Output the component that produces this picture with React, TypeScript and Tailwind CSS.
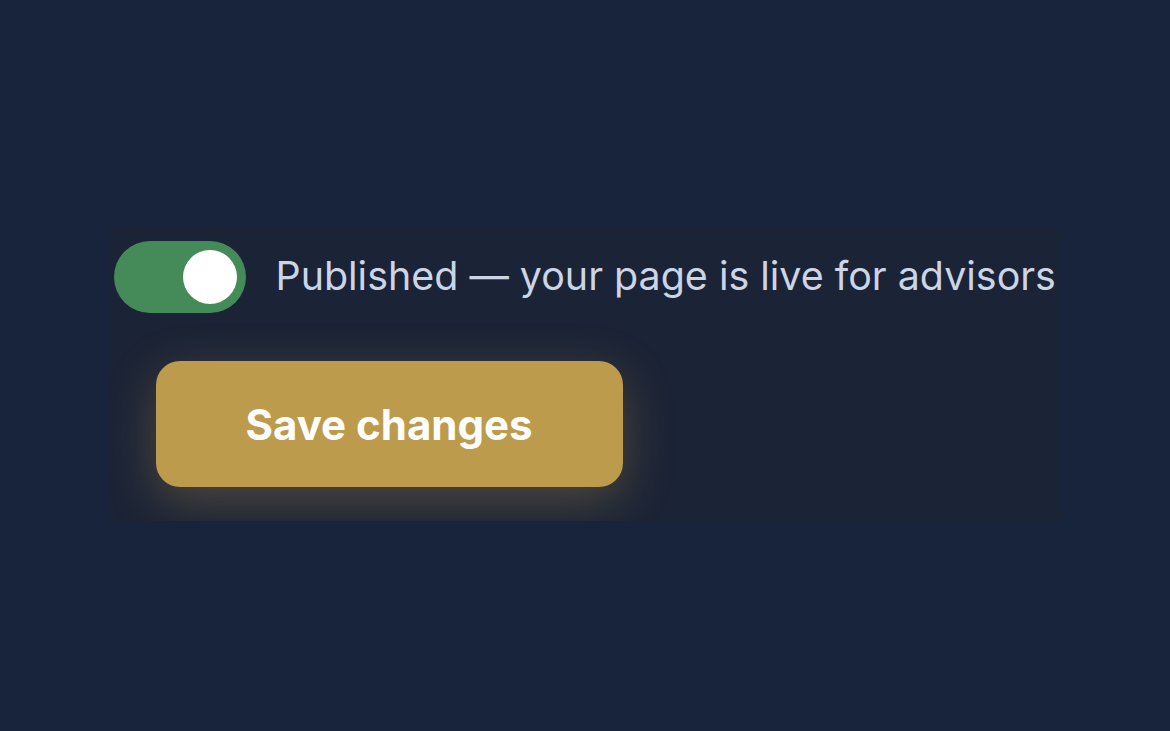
import React, { useState } from 'react';

const PublishPanel = () => {
  const [published, setPublished] = useState(true);

  return (
    <div className="w-[953px] overflow-hidden bg-[#1b2336] px-[5px] pt-[13px] pb-[34px]">
      {/* publish toggle */}
      <div className="flex items-center gap-[30px]">
        <button
          type="button"
          onClick={() => setPublished(!published)}
          className={`flex h-[72px] w-[132px] shrink-0 items-center rounded-full p-[9px] ${published ? 'justify-end bg-[#458b59]' : 'justify-start bg-[#3a4458]'}`}
        >
          <span className="block h-[54px] w-[54px] rounded-full bg-white"></span>
        </button>
        <span className="text-[39.4px] leading-none text-[#cbd5e6]">
          Published — your page is live for advisors
        </span>
      </div>

      {/* save */}
      <div className="mt-[48px] pl-[42px]">
        <button
          type="button"
          className="flex h-[126px] w-[467px] items-center justify-center rounded-[24px] bg-[#bd9b4c] text-[42px] font-bold text-white shadow-[0_14px_50px_rgba(189,155,76,0.32)]"
        >
          Save changes
        </button>
      </div>
    </div>
  );
};

export default function App() {
  return (
    <div
      className="flex min-h-screen items-start justify-center bg-[#18243b] pt-[228px]"
      style={{ fontFamily: 'Inter, "Noto Sans", sans-serif' }}
    >
      <PublishPanel />
    </div>
  );
}
